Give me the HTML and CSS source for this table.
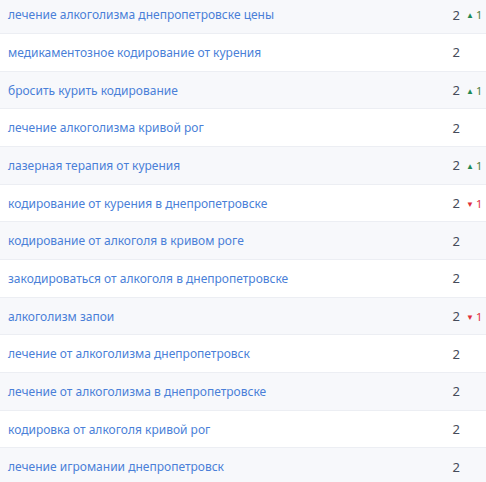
FILE: index.html
```html
<!DOCTYPE html>
<html lang="ru">
<head>
  <meta charset="UTF-8" />
  <title>Запросы</title>
  <link rel="stylesheet" href="styles.css">
</head>
<body>
  <table class="keywords">
    <tr><td class="phrase">лечение алкоголизма днепропетровске цены</td><td class="pos">2</td><td class="delta up"><span class="arrow">▲</span>1</td></tr>
    <tr><td class="phrase">медикаментозное кодирование от курения</td><td class="pos">2</td><td class="delta"></td></tr>
    <tr><td class="phrase">бросить курить кодирование</td><td class="pos">2</td><td class="delta up"><span class="arrow">▲</span>1</td></tr>
    <tr><td class="phrase">лечение алкоголизма кривой рог</td><td class="pos">2</td><td class="delta"></td></tr>
    <tr><td class="phrase">лазерная терапия от курения</td><td class="pos">2</td><td class="delta up"><span class="arrow">▲</span>1</td></tr>
    <tr><td class="phrase">кодирование от курения в днепропетровске</td><td class="pos">2</td><td class="delta down"><span class="arrow">▼</span>1</td></tr>
    <tr><td class="phrase">кодирование от алкоголя в кривом роге</td><td class="pos">2</td><td class="delta"></td></tr>
    <tr><td class="phrase">закодироваться от алкоголя в днепропетровске</td><td class="pos">2</td><td class="delta"></td></tr>
    <tr><td class="phrase">алкоголизм запои</td><td class="pos">2</td><td class="delta down"><span class="arrow">▼</span>1</td></tr>
    <tr><td class="phrase">лечение от алкоголизма днепропетровск</td><td class="pos">2</td><td class="delta"></td></tr>
    <tr><td class="phrase">лечение от алкоголизма в днепропетровске</td><td class="pos">2</td><td class="delta"></td></tr>
    <tr><td class="phrase">кодировка от алкоголя кривой рог</td><td class="pos">2</td><td class="delta"></td></tr>
    <tr><td class="phrase">лечение игромании днепропетровск</td><td class="pos">2</td><td class="delta"></td></tr>
  </table>
</body>
</html>
```
FILE: styles.css
```css
body {
  margin: 0;
  background: #fff;
  font-family: "Noto Sans", "Open Sans", sans-serif;
  font-size: 12px;
  overflow: hidden;
}

.keywords {
  width: 100%;
  border-collapse: collapse;
  margin-top: -4px;
}

.keywords tr {
  height: 37.67px;
  border-bottom: 1px solid #eceef3;
}

.keywords tr:nth-child(odd) {
  background: #f7f8fb;
}

.keywords td {
  padding: 0;
  vertical-align: middle;
}

.phrase {
  padding-left: 8px !important;
  color: #4a7fd8;
}

.pos {
  width: 30px;
  text-align: right;
  color: #454b5a;
  font-size: 13px;
}

.delta {
  width: 20px;
  padding-left: 6px !important;
  font-size: 11px;
  white-space: nowrap;
}

.delta .arrow {
  font-size: 8px;
  margin-right: 2px;
  position: relative;
  top: -1px;
}

.delta.up {
  color: #4f7d3a;
}

.delta.up .arrow {
  color: #1e8a55;
}

.delta.down {
  color: #e0303c;
}
```
